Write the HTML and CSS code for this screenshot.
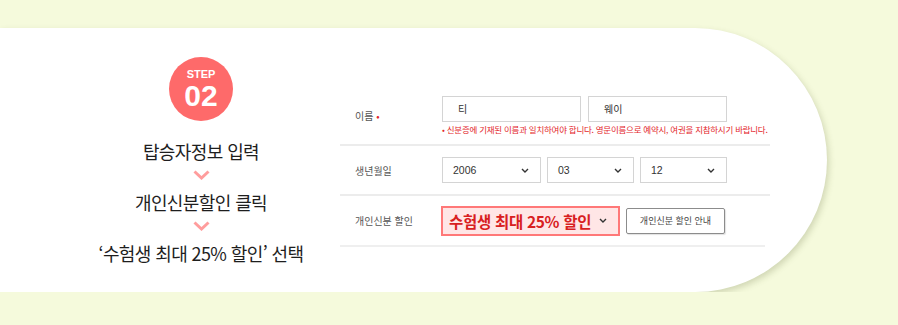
FILE: index.html
```html
<!DOCTYPE html>
<html lang="ko">
<head>
<meta charset="utf-8" />
<title>탑승자정보 입력</title>
<link rel="stylesheet" href="styles.css">
</head>
<body>
<div class="card">
  <!-- 단계 안내 -->
  <div class="steps">
    <div class="step_badge">
      <span class="step_label">STEP</span>
      <span class="step_num">02</span>
    </div>
    <p class="step_text first">탑승자정보 입력</p>
    <div class="step_arrow"><svg width="17" height="10" viewBox="0 0 17 10"><path d="M1.5 1.5 L8.5 8 L15.5 1.5" fill="none" stroke="#ff9d9d" stroke-width="3"/></svg></div>
    <p class="step_text">개인신분할인 클릭</p>
    <div class="step_arrow"><svg width="17" height="10" viewBox="0 0 17 10"><path d="M1.5 1.5 L8.5 8 L15.5 1.5" fill="none" stroke="#ff9d9d" stroke-width="3"/></svg></div>
    <p class="step_text">‘수험생 최대 25% 할인’ 선택</p>
  </div>

  <!-- 입력 폼 -->
  <div class="form">
    <div class="row row_name">
      <div class="label">이름 <em class="dot">•</em></div>
      <div class="field">
        <div class="inputs">
          <div class="box w139">티</div>
          <div class="box w139">웨이</div>
        </div>
        <p class="notice">• 신분증에 기재된 이름과 일치하여야 합니다. 영문이름으로 예약시, 여권을 지참하시기 바랍니다.</p>
      </div>
    </div>

    <div class="row row_birth">
      <div class="label">생년월일</div>
      <div class="field">
        <div class="inputs">
          <div class="box select w99"><span>2006</span><svg width="8" height="5" viewBox="0 0 8 5"><path d="M1 1 L4 4 L7 1" fill="none" stroke="#333" stroke-width="1.4"/></svg></div>
          <div class="box select w87"><span>03</span><svg width="8" height="5" viewBox="0 0 8 5"><path d="M1 1 L4 4 L7 1" fill="none" stroke="#333" stroke-width="1.4"/></svg></div>
          <div class="box select w87"><span>12</span><svg width="8" height="5" viewBox="0 0 8 5"><path d="M1 1 L4 4 L7 1" fill="none" stroke="#333" stroke-width="1.4"/></svg></div>
        </div>
      </div>
    </div>

    <div class="row row_discount">
      <div class="label">개인신분 할인</div>
      <div class="field">
        <div class="inputs">
          <div class="box select discount"><span>수험생 최대 25% 할인</span><svg width="8" height="5" viewBox="0 0 8 5"><path d="M1 1 L4 4 L7 1" fill="none" stroke="#333" stroke-width="1.4"/></svg></div>
          <div class="guide_btn">개인신분 할인 안내</div>
        </div>
      </div>
    </div>
  </div>
</div>
</body>
</html>
```

FILE: styles.css
```css
* {
	margin: 0;
	padding: 0;
	box-sizing: border-box;
}
body {
	background: #f5fadc;
	font-family: "Noto Sans CJK KR", "Noto Sans", sans-serif;
	color: #222;
	overflow: hidden;
}
.card {
	display: flex;
	align-items: flex-start;
	width: 827px;
	height: 264px;
	margin-top: 28px;
	background: #fff;
	border-radius: 0 132px 132px 0;
	box-shadow: 2px 3px 6px rgba(80, 90, 40, 0.22);
}

/* 단계 안내 */
.steps {
	width: 278px;
	margin-left: 62px;
	padding-top: 29px;
	display: flex;
	flex-direction: column;
	align-items: center;
}
.step_badge {
	width: 64px;
	height: 64px;
	border-radius: 50%;
	background: #fe6a6a;
	color: #fff;
	display: flex;
	flex-direction: column;
	align-items: center;
	font-family: "Liberation Sans", Arial, sans-serif;
	font-weight: bold;
	padding-top: 12px;
}
.step_label {
	font-size: 11px;
	line-height: 11px;
}
.step_num {
	font-size: 30px;
	line-height: 30px;
	margin-top: 1px;
}
.step_text {
	font-size: 18px;
	line-height: 26px;
	letter-spacing: -0.6px;
	color: #1e1e1e;
	white-space: nowrap;
}
.step_text.first {
	margin-top: 17px;
}
.step_arrow {
	height: 25px;
	padding-top: 6px;
	display: flex;
	justify-content: center;
}

/* 입력 폼 */
.form {
	width: 430px;
	margin-top: 56px;
}
.row {
	display: flex;
	align-items: center;
	border-bottom: 2px solid #ececec;
}
.row_name {
	height: 62px;
	padding-top: 2px;
}
.row_birth {
	height: 50px;
}
.row_discount {
	height: 51px;
	border-bottom-color: #efefef;
	width: 425px;
}
.label {
	width: 102px;
	padding-left: 15px;
	font-size: 10px;
	color: #555;
	white-space: nowrap;
}
.label .dot {
	font-style: normal;
	color: #e3262b;
}
.field {
	flex: 1;
}
.inputs {
	display: flex;
	align-items: center;
	gap: 6px;
}
.row_name .inputs {
	gap: 7px;
}
.box {
	height: 26px;
	border: 1px solid #d4d4d4;
	background: #fff;
	font-size: 10px;
	color: #333;
	display: flex;
	align-items: center;
	padding-left: 15px;
}
.w139 { width: 139px; }
.w99 { width: 99px; }
.w87 { width: 87px; }
.select {
	justify-content: space-between;
	padding: 0 11px 0 10px;
	font-family: "Liberation Sans", "Noto Sans CJK KR", sans-serif;
	font-size: 10.5px;
}
.notice {
	margin-top: 2px;
	font-size: 8.5px;
	line-height: 11px;
	letter-spacing: -0.25px;
	color: #e3262b;
	white-space: nowrap;
}
.discount {
	width: 179px;
	height: 30px;
	margin-left: -1px;
	border: 2px solid #ff7878;
	background: #ffe6e6;
	padding: 0 11px 0 6px;
	font-family: "Noto Sans CJK KR", sans-serif;
	font-size: 15.5px;
	font-weight: bold;
	color: #d8201f;
	letter-spacing: -0.3px;
}
.guide_btn {
	width: 99px;
	height: 26px;
	border: 1px solid #8c8c8c;
	border-radius: 2px;
	background: #fff;
	font-size: 9px;
	color: #444;
	display: flex;
	align-items: center;
	justify-content: center;
	box-shadow: 1px 1px 1px rgba(0, 0, 0, 0.12);
}
```
